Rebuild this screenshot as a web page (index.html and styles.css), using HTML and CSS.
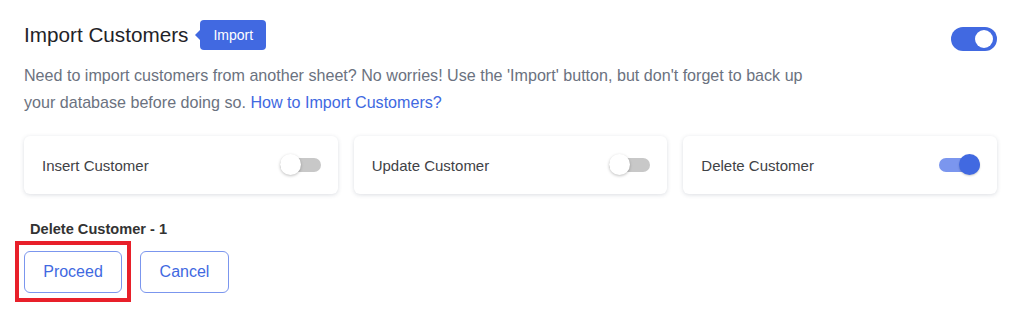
FILE: index.html
```html
<!DOCTYPE html>
<html>
<head>
<meta charset="utf-8">
<link rel="stylesheet" href="styles.css">
</head>
<body>
<div class="page">
  <div class="header">
    <div class="title-wrap">
      <h1 class="title">Import Customers</h1>
      <span class="badge">Import</span>
    </div>
    <span class="switch switch-lg on"><span class="knob"></span></span>
  </div>
  <p class="desc">Need to import customers from another sheet? No worries! Use the 'Import' button, but don't forget to back up your database before doing so. <a class="link" href="#">How to Import Customers?</a></p>
  <div class="cards">
    <div class="card"><span class="card-label">Insert Customer</span><span class="switch switch-sm"><span class="knob"></span></span></div>
    <div class="card"><span class="card-label">Update Customer</span><span class="switch switch-sm"><span class="knob"></span></span></div>
    <div class="card"><span class="card-label">Delete Customer</span><span class="switch switch-sm on"><span class="knob"></span></span></div>
  </div>
  <div class="summary">Delete Customer - 1</div>
  <div class="actions">
    <div class="highlight"><button class="btn">Proceed</button></div>
    <button class="btn">Cancel</button>
  </div>
</div>
</body>
</html>
```
FILE: styles.css
```css
* { box-sizing: border-box; }
html, body { margin: 0; background: #fff; }
body { font-family: "Liberation Sans", Arial, sans-serif; }
.page { padding: 20px 27px 0 24px; }
.header { display: flex; align-items: center; justify-content: space-between; height: 30px; }
.title-wrap { display: flex; align-items: center; }
.title { margin: 0; font-size: 20.7px; font-weight: 400; color: #1f2328; line-height: 30px; }
.badge { position: relative; margin-left: 12px; height: 30px; padding: 0 13px; display: inline-flex; align-items: center; background: #4169e1; color: #fff; font-size: 14px; border-radius: 4px; }
.badge::before { content: ""; position: absolute; left: -5px; top: 50%; margin-top: -6px; border-top: 6px solid transparent; border-bottom: 6px solid transparent; border-right: 6px solid #4169e1; }
.switch { position: relative; display: inline-block; flex: none; }
.switch-lg { width: 46px; height: 24px; border-radius: 12px; background: #4169e1; margin-top: 7px; }
.switch-lg .knob { position: absolute; right: 4px; top: 3px; width: 18px; height: 18px; border-radius: 50%; background: #fff; }
.desc { margin: 12px 0 0; width: 795px; font-size: 16.1px; line-height: 27px; color: #6b7280; }
.link { color: #4169e1; text-decoration: none; display: inline-block; }
.cards { display: grid; grid-template-columns: repeat(3, 1fr); gap: 16px; margin-top: 20px; }
.card { height: 58px; padding: 0 17px 0 18px; display: flex; align-items: center; justify-content: space-between; background: #fff; border-radius: 6px; box-shadow: 0 1px 4px rgba(60, 72, 100, 0.18); }
.card-label { font-size: 15px; color: #3f4246; }
.switch-sm { width: 41px; height: 14px; border-radius: 7px; background: #c8c8c8; }
.switch-sm .knob { position: absolute; left: 0; top: -4px; width: 21px; height: 21px; border-radius: 50%; background: #fff; box-shadow: 0 1px 3px rgba(0,0,0,0.25); }
.switch-sm.on { background: #7b96ee; }
.switch-sm.on .knob { left: auto; right: 0; background: #4169e1; box-shadow: 0 1px 2px rgba(0,0,0,0.2); }
.summary { margin: 27px 0 0 6px; font-size: 14.6px; font-weight: 700; color: #333; line-height: 16px; }
.actions { display: flex; align-items: center; gap: 9px; margin-top: 4px; margin-left: -9px; }
.highlight { border: 4px solid #e8202a; padding: 6px 5px 5px 5px; }
.btn { height: 42px; padding: 0 18px; background: #fff; border: 1px solid #7b96ee; border-radius: 6px; color: #4169e1; font-family: "Liberation Sans", Arial, sans-serif; font-size: 16px; cursor: pointer; }
.highlight .btn { width: 98px; }
.actions > .btn { width: 89px; }
```
